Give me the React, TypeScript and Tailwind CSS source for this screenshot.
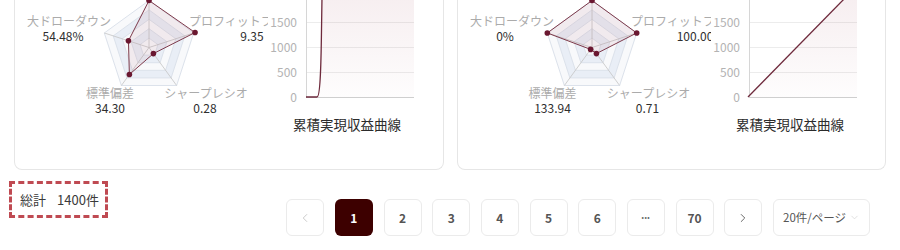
import { ChevronDown, ChevronLeft, ChevronRight } from "lucide-react";

type RadarProps = {
  values: number[];
  labels: { name: string; value: string; x: number; vx: number; y: number; anchor?: "start" | "middle" }[];
};

const CX = 134;
const CY = 47.5;
const R = 47;

function pt(i: number, r: number) {
  const a = ((-90 + 72 * i) * Math.PI) / 180;
  return [CX + r * Math.cos(a), CY + r * Math.sin(a)];
}

function ring(k: number) {
  return [0, 1, 2, 3, 4].map((i) => pt(i, (R * k) / 5).join(",")).join(" ");
}

function Radar({ values, labels }: RadarProps) {
  const data = values.map((v, i) => pt(i, R * v));
  return (
    <svg width="253" height="130" className="shrink-0">
      {[5, 4, 3, 2, 1].map((k) => (
        <polygon
          key={k}
          points={ring(k)}
          fill={k % 2 === 1 ? "#f8f9fb" : "#e9eef6"}
          stroke="#dce2eb"
          strokeWidth="1"
        />
      ))}
      {[0, 1, 2, 3, 4].map((i) => {
        const [x, y] = pt(i, R);
        return <line key={i} x1={CX} y1={CY} x2={x} y2={y} stroke="#c4c4c4" strokeWidth="0.8" />;
      })}
      <polygon
        points={data.map((p) => p.join(",")).join(" ")}
        fill="rgba(160,70,90,0.08)"
        stroke="#7d3a4b"
        strokeWidth="1"
      />
      {data.map(([x, y], i) => (
        <circle key={i} cx={x} cy={y} r="2.8" fill="#6a1730" />
      ))}
      {labels.map((l) => (
        <g key={l.name} fontSize="12">
          <text x={l.x} y={l.y} textAnchor={l.anchor ?? "middle"} fill="#ababab">
            {l.name}
          </text>
          <text x={l.vx} y={l.y + 15} textAnchor="middle" fill="#2e2e2e">
            {l.value}
          </text>
        </g>
      ))}
    </svg>
  );
}

function Curve({ kind }: { kind: "jump" | "linear" }) {
  const ticks = [
    { v: "1500", y: 22 },
    { v: "1000", y: 47 },
    { v: "500", y: 72 },
    { v: "0", y: 97 },
  ];
  const line =
    kind === "jump"
      ? "M38 97 L49 97 C52 97 53 70 53.5 30 L54 -3"
      : "M37 97 L135 -3";
  const area =
    kind === "jump"
      ? "M49 97 C52 97 53 70 53.5 30 L54 -3 L146 -3 L146 97 Z"
      : "M37 97 L135 -3 L146 -3 L146 97 Z";
  const gid = `g-${kind}`;
  return (
    <div className="flex flex-col">
      <svg width="177" height="108">
        <defs>
          <linearGradient id={gid} x1="0" y1="0" x2="0" y2="1">
            <stop offset="0" stopColor="rgba(160,70,90,0.09)" />
            <stop offset="1" stopColor="rgba(160,70,90,0.01)" />
          </linearGradient>
        </defs>
        {ticks.map((t) => (
          <g key={t.v}>
            <line x1="38" x2="146" y1={t.y + 0.5} y2={t.y + 0.5} stroke={t.v === "0" ? "#cfcfcf" : "#ececec"} />
            <text x="29" y={t.y + 4.5} textAnchor="end" fontSize="12" fill="#b3b3b3">
              {t.v}
            </text>
          </g>
        ))}
        <line x1="38.5" x2="38.5" y1="-5" y2="97" stroke="#d6d6d6" />
        <path d={area} fill={`url(#${gid})`} />
        <path d={line} fill="none" stroke="#6e2a3c" strokeWidth="1.3" />
      </svg>
      <div className="mt-[6px] whitespace-nowrap pl-[25px] text-[13.5px] leading-5 text-[#2b2b2b]">累積実現収益曲線</div>
    </div>
  );
}

function Card({ radar, curve, width }: { radar: RadarProps; curve: "jump" | "linear"; width: string }) {
  return (
    <div className={`flex h-[170px] shrink-0 overflow-hidden rounded-b-lg border border-t-0 border-[#e6e6e6] bg-white ${width}`}>
      <Radar {...radar} />
      <Curve kind={curve} />
    </div>
  );
}

const leftRadar: RadarProps = {
  values: [1, 1.03, 0.16, 0.71, 0.46],
  labels: [
    { name: "大ドローダウン", value: "54.48%", x: 54, vx: 48, y: 26 },
    { name: "プロフィットファクター", value: "9.35", x: 174, vx: 237, y: 26, anchor: "start" },
    { name: "標準偏差", value: "34.30", x: 95, vx: 95, y: 98 },
    { name: "シャープレシオ", value: "0.28", x: 191, vx: 190, y: 98 },
  ],
};

const rightRadar: RadarProps = {
  values: [1, 1.0, 0.16, 0.05, 1.0],
  labels: [
    { name: "大ドローダウン", value: "0%", x: 54, vx: 47, y: 26 },
    { name: "プロフィットファクター", value: "100.00", x: 173, vx: 237, y: 26, anchor: "start" },
    { name: "標準偏差", value: "133.94", x: 94.5, vx: 94.5, y: 98 },
    { name: "シャープレシオ", value: "0.71", x: 190.5, vx: 189.5, y: 98 },
  ],
};

const pages = ["1", "2", "3", "4", "5", "6", "•••", "70"];

export default function App() {
  return (
    <div className="h-[250px] w-[900px] overflow-hidden bg-white font-['Noto_Sans_CJK_JP',sans-serif]">
      <div className="flex gap-[13px] px-[14px]">
        <Card radar={leftRadar} curve="jump" width="w-[430px]" />
        <Card radar={rightRadar} curve="linear" width="w-[429px]" />
      </div>

      <div className="flex items-start pl-[9px] pr-[30px]">
        <div className="mt-[11px] flex h-[37px] items-center border-[3px] border-dashed border-[#bf4a52] pl-[8px] pr-[6px] text-[13px] text-[#3a3a3a]">
          <span>総計</span>
          <span className="ml-[11px]">1400件</span>
        </div>

        <div className="mt-[29px] ml-auto flex gap-[10.7px]">
          <button className="flex h-[37px] w-[38px] items-center justify-center rounded-md border border-[#ebebeb] text-[#c4c4c4]">
            <ChevronLeft size={14} strokeWidth={1.5} />
          </button>
          {pages.map((p) => (
            <button
              key={p}
              className={
                p === "1"
                  ? "flex h-[37px] w-[38px] items-center justify-center rounded-md bg-[#3d0000] text-[12px] font-bold text-white"
                  : p === "•••"
                    ? "flex h-[37px] w-[38px] items-center justify-center rounded-md border border-[#ebebeb] text-[7px] tracking-[0.5px] text-[#666]"
                    : "flex h-[37px] w-[38px] items-center justify-center rounded-md border border-[#ebebeb] text-[12px] font-semibold text-[#555]"
              }
            >
              {p}
            </button>
          ))}
          <button className="flex h-[37px] w-[38px] items-center justify-center rounded-md border border-[#ebebeb] text-[#555]">
            <ChevronRight size={14} strokeWidth={1.5} />
          </button>
          <div className="flex h-[37px] w-[97px] items-center justify-between whitespace-nowrap rounded-md border border-[#ebebeb] pl-[9px] pr-[9px] text-[11.5px] text-[#555]">
            <span>20件/ページ</span>
            <ChevronDown size={11} strokeWidth={1.2} className="text-[#c8c8c8]" />
          </div>
        </div>
      </div>
    </div>
  );
}
